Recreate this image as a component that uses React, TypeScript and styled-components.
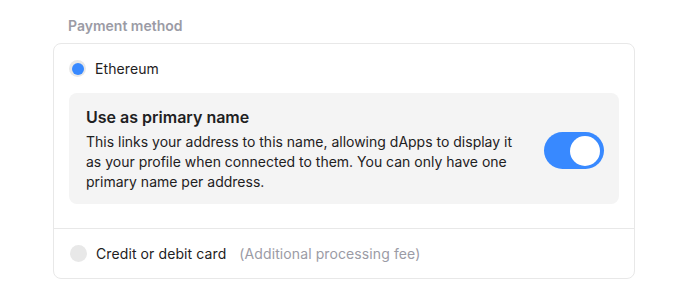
import styled, { createGlobalStyle } from 'styled-components';
import { useState } from 'react';

const GlobalStyle = createGlobalStyle`
  body {
    margin: 0;
    background: #ffffff;
    font-family: Inter, "Noto Sans", sans-serif;
    color: #1e2122;
  }
`;

const Page = styled.div`
    padding: 17px 40px 0 53px;
    width: 582px;
  `,
  Label = styled.div`
    margin-left: 15px;
    font-size: 14px;
    line-height: 18px;
    font-weight: 600;
    color: #9b9ba5;
    margin-bottom: 8px;
  `,
  Card = styled.div`
    border: 1px solid #e8e8e8;
    border-radius: 8px;
    display: flex;
    flex-direction: column;
  `,
  Section = styled.div<{ $last?: boolean }>`
    display: flex;
    flex-direction: column;
    gap: 16px;
    padding: ${p => (p.$last ? '16px' : '16px 15px 24px 15px')};
    border-bottom: ${p => (p.$last ? 'none' : '1px solid #e8e8e8')};
  `,
  OptionRow = styled.label`
    display: flex;
    align-items: center;
    gap: 9px;
    font-size: 14px;
    line-height: 17px;
    letter-spacing: 0.1px;
    cursor: pointer;
  `,
  Radio = styled.span<{ $checked: boolean }>`
    width: 17px;
    height: 17px;
    border-radius: 50%;
    background: #e8e8e8;
    display: flex;
    align-items: center;
    justify-content: center;
    flex: none;
    &::after {
      content: '';
      width: 12px;
      height: 12px;
      border-radius: 50%;
      background: ${p => (p.$checked ? '#3889ff' : 'transparent')};
    }
  `,
  Hint = styled.span`
    color: #9b9ba5;
    margin-left: 4px;
  `,
  PrimaryBox = styled.div`
    background: #f4f4f4;
    border-radius: 8px;
    padding: 14px 15px 12px 17px;
    display: flex;
    align-items: center;
    gap: 26px;
  `,
  BoxText = styled.div`
    flex: 1;
    display: flex;
    flex-direction: column;
    gap: 5px;
  `,
  BoxTitle = styled.div`
    font-size: 16px;
    line-height: 20px;
    font-weight: 600;
  `,
  BoxDesc = styled.div`
    font-size: 14px;
    line-height: 20px;
  `,
  Toggle = styled.button<{ $on: boolean }>`
    width: 60px;
    height: 37px;
    border: none;
    border-radius: 19px;
    padding: 0 4px;
    background: ${p => (p.$on ? '#3889ff' : '#d6d6d6')};
    display: flex;
    align-items: center;
    justify-content: ${p => (p.$on ? 'flex-end' : 'flex-start')};
    flex: none;
    cursor: pointer;
    margin-top: 2px;
    &::after {
      content: '';
      width: 30px;
      height: 30px;
      border-radius: 50%;
      background: #ffffff;
    }
  `;

export default function App() {
  const [method, setMethod] = useState<'eth' | 'card'>('eth');
  const [primary, setPrimary] = useState(true);

  return (
    <Page>
      <GlobalStyle />
      <Label>Payment method</Label>
      <Card>
        <Section>
          <OptionRow onClick={() => setMethod('eth')}>
            <Radio $checked={method === 'eth'} />
            Ethereum
          </OptionRow>
          <PrimaryBox>
            <BoxText>
              <BoxTitle>Use as primary name</BoxTitle>
              <BoxDesc>
                This links your address to this name, allowing dApps to display it as your profile when connected to them. You can only have one primary name per address.
              </BoxDesc>
            </BoxText>
            <Toggle $on={primary} onClick={() => setPrimary(!primary)} aria-label="Use as primary name" />
          </PrimaryBox>
        </Section>
        <Section $last>
          <OptionRow onClick={() => setMethod('card')}>
            <Radio $checked={method === 'card'} />
            Credit or debit card
            <Hint>(Additional processing fee)</Hint>
          </OptionRow>
        </Section>
      </Card>
    </Page>
  );
}
